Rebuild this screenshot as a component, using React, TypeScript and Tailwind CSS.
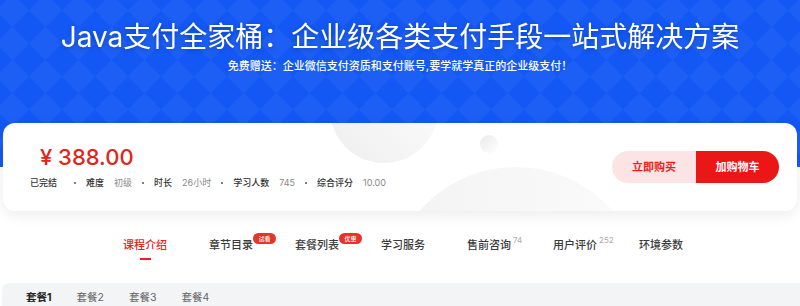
import React from 'react'

const tabs = [
    { label: '课程介绍', active: true },
    { label: '章节目录', badge: '试看' },
    { label: '套餐列表', badge: '优惠' },
    { label: '学习服务' },
    { label: '售前咨询', count: '74' },
    { label: '用户评价', count: '252' },
    { label: '环境参数' },
]

const meta = [
    { label: '难度', value: '初级' },
    { label: '时长', value: '26小时' },
    { label: '学习人数', value: '745' },
    { label: '综合评分', value: '10.00' },
]

const App = () => {
    return (
        <div className="w-[800px] h-[306px] overflow-hidden bg-white font-['Inter','Noto_Sans_CJK_SC',sans-serif]">
            {/* Banner */}
            <div className="relative h-[167px] bg-[#1358f4] overflow-hidden">
                <svg className="absolute inset-0" width="800" height="167">
                    <defs>
                        <pattern id="dia" width="33" height="33" patternUnits="userSpaceOnUse" x="-4" y="-6">
                            <polygon points="16.5,0 33,16.5 16.5,33 0,16.5" fill="#ffffff" fillOpacity="0.045" />
                        </pattern>
                    </defs>
                    <rect width="800" height="167" fill="url(#dia)" />
                </svg>
                <div className="relative flex flex-col items-center pt-[16px] text-white">
                    <h1 className="text-[28px] leading-[42px] font-normal drop-shadow-[0_1px_2px_rgba(0,0,0,0.25)]">
                        Java支付全家桶：企业级各类支付手段一站式解决方案
                    </h1>
                    <p className="text-[11px] leading-[14px] font-medium mt-[1px]">
                        免费赠送：企业微信支付资质和支付账号,要学就学真正的企业级支付！
                    </p>
                </div>
            </div>

            {/* Price card */}
            <div className="relative ml-[3px] w-[794px] -mt-[44px] h-[88px] rounded-[12px] bg-white shadow-[0_4px_14px_rgba(0,0,0,0.08)] overflow-hidden flex items-center justify-between">
                <div className="absolute left-[327px] top-[-68px] w-[108px] h-[108px] rounded-full bg-gradient-to-tr from-[#eeeeee] to-white" />
                <div className="absolute left-[477px] top-[12px] w-[18px] h-[18px] rounded-full bg-gradient-to-br from-[#eaeaea] to-white" />
                <div className="absolute left-[385px] top-[44px] w-[256px] h-[256px] rounded-full bg-gradient-to-r from-[#f3f3f3] to-[#fbfbfb]" />

                <div className="relative pl-[27px] pt-[1px] self-start mt-[22px]">
                    <div className="ml-[10px] text-[22px] leading-[22px] font-medium text-[#e1251b]">¥ 388.00</div>
                    <div className="flex items-center mt-[9px] text-[9px] leading-[12px]">
                        <span className="text-[#333] font-medium mr-[7px]">已完结</span>
                        {meta.map((m) => (
                            <div key={m.label} className="flex items-center">
                                <span className="w-[2px] h-[2px] rounded-full bg-[#555] mx-[10px]" />
                                <span className="text-[#333] font-medium">{m.label}</span>
                                <span className="text-[#888] ml-[10px]">{m.value}</span>
                            </div>
                        ))}
                    </div>
                </div>

                <div className="relative flex mr-[18px] h-[32px] rounded-full overflow-hidden text-[11px] font-bold">
                    <button className="w-[84px] bg-[#fde4e4] text-[#e1251b]">立即购买</button>
                    <button className="w-[83px] bg-[#eb1717] text-white">加购物车</button>
                </div>
            </div>

            {/* Tabs */}
            <div className="flex gap-[42px] pl-[123px] pt-[26px] h-[72px]">
                {tabs.map((t) => (
                    <div key={t.label} className="flex flex-col items-center">
                        <div className={`relative text-[11px] leading-[16px] font-medium ${t.active ? 'text-[#e1251b]' : 'text-[#3a3a3a]'}`}>
                            {t.label}
                            {t.badge && (
                                <span className="absolute left-full top-[-4px] w-[23px] h-[11px] rounded-full bg-[#e8332c] text-white text-[6px] leading-[11px] text-center">
                                    {t.badge}
                                </span>
                            )}
                            {t.count && (
                                <span className="absolute left-full ml-[2px] top-[-1px] text-[8px] leading-[8px] text-[#aaa] font-normal">
                                    {t.count}
                                </span>
                            )}
                        </div>
                        {t.active && <div className="mt-[5px] w-[11px] h-[2px] bg-[#e1251b]" />}
                    </div>
                ))}
            </div>

            {/* Package panel */}
            <div className="ml-[2px] h-[30px] rounded-tl-[8px] bg-[#f3f4f6] flex gap-[25px] pl-[24px] pt-[8px] text-[10.5px] leading-[14px]">
                <span className="font-bold text-[#222]">套餐1</span>
                <span className="text-[#666]">套餐2</span>
                <span className="text-[#666]">套餐3</span>
                <span className="text-[#666]">套餐4</span>
            </div>
        </div>
    )
}

export default App
